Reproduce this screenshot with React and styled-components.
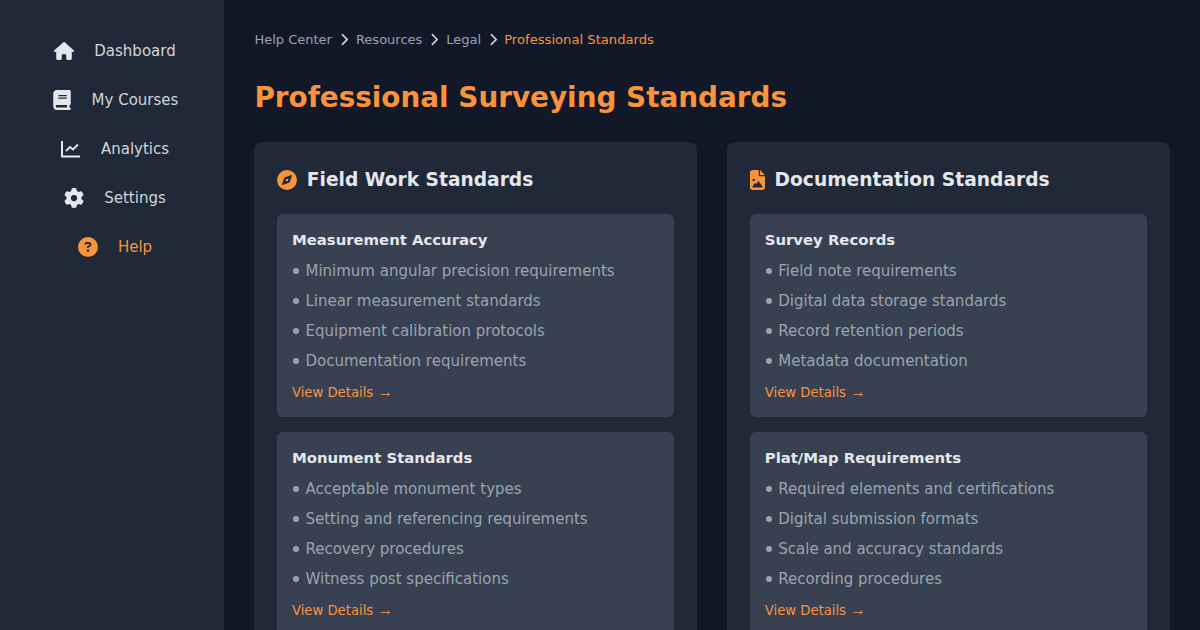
import React from "react";
import styled, { createGlobalStyle } from "styled-components";
import { FaHouse, FaBook, FaGear, FaCircleQuestion, FaCompass, FaChevronRight, FaFileImage } from "react-icons/fa6";

const GlobalStyle = createGlobalStyle`
  html, body {
    margin: 0;
    height: 630px;
    overflow: hidden;
    background: #111827;
    font-family: "DejaVu Sans", sans-serif;
  }
`;

const Page = styled.div`
  display: flex;
  width: 1200px;
  height: 630px;
  overflow: hidden;
`;

const Sidebar = styled.aside`
  width: 224px;
  flex-shrink: 0;
  background: #1f2937;
  padding: 31px 13px 16px 19px;
  box-sizing: border-box;
  display: flex;
  flex-direction: column;
  gap: 8px;
`;

const NavItem = styled.a`
  height: 40.8px;
  display: flex;
  align-items: center;
  justify-content: center;
  gap: 20px;
  font-size: 15px;
  color: ${(p) => (p.$active ? "#fb923c" : "#d1d5db")};
`;

const NavIcon = styled.span`
  width: 20px;
  height: 20px;
  display: flex;
  justify-content: center;
  color: ${(p) => (p.$active ? "#fb923c" : "#e5e7eb")};
  svg { height: 20px; width: auto; flex-shrink: 0; }
`;

const Main = styled.main`
  flex: 1;
  min-width: 0;
  padding: 29px 30.4px 30px;
  box-sizing: border-box;
`;

const Crumbs = styled.nav`
  display: flex;
  align-items: center;
  gap: 7px;
  height: 20px;
  font-size: 13px;
  color: #9ca3af;
  margin-bottom: 31px;
  svg { width: 10px; height: 13px; color: #d1d5db; }
`;

const Current = styled.span`
  margin-left: -1px;
  font-size: 13.15px;
  color: #fb923c;
`;

const Title = styled.h1`
  margin: 0 0 26px;
  font-size: 27.85px;
  line-height: 36px;
  font-weight: 700;
  color: #fb923c;
`;

const Columns = styled.div`
  display: grid;
  grid-template-columns: 1fr 1fr;
  gap: 30.4px;
`;

const Panel = styled.section`
  background: #1f2937;
  border-radius: 8px;
  padding: 26px 22.4px 25px;
`;

const PanelHead = styled.h2`
  display: flex;
  align-items: center;
  gap: 10px;
  margin: 0 0 21.5px;
  font-size: 18.65px;
  line-height: 24px;
  font-weight: 700;
  color: #e5e7eb;
  svg { height: 20px; width: ${(p) => p.$iconWidth}px; color: #fb923c; }
`;

const Card = styled.div`
  background: #374151;
  border-radius: 6px;
  padding: 16.5px 15.2px 15.5px;
  margin-bottom: 15px;
`;

const CardTitle = styled.h3`
  margin: 0 0 5.5px;
  font-size: 14.85px;
  line-height: 20px;
  font-weight: 700;
  color: #e5e7eb;
`;

const Bullets = styled.ul`
  list-style: none;
  margin: 0 0 8.5px;
  padding: 0;
`;

const Bullet = styled.li`
  font-size: 15px;
  line-height: 30px;
  color: #9ca3af;

  &::before {
    content: "";
    display: inline-block;
    width: 6px;
    height: 6px;
    margin: 0 6.5px 1.5px 1px;
    border-radius: 50%;
    background: #9ca3af;
  }
`;

const DetailsLink = styled.a`
  display: block;
  font-size: 13.2px;
  line-height: 17px;
  color: #fb923c;
`;

const Arrow = styled.span`
  font-family: "Liberation Sans", sans-serif;
  font-size: 15.5px;
  line-height: 1;
`;

const ChartIcon = () => (
  <svg viewBox="0 0 20 20" fill="none" stroke="currentColor">
    <path d="M1 2v15.5h18" strokeWidth="2" />
    <path d="M5 12l4-4 3 2.5 5-5" strokeWidth="1.8" />
  </svg>
);

const nav = [
  { label: "Dashboard", icon: FaHouse },
  { label: "My Courses", icon: FaBook },
  { label: "Analytics", icon: ChartIcon },
  { label: "Settings", icon: FaGear },
  { label: "Help", icon: FaCircleQuestion, active: true },
];

const panels = [
  {
    title: "Field Work Standards",
    icon: FaCompass,
    iconWidth: 20,
    cards: [
      { title: "Measurement Accuracy", items: ["Minimum angular precision requirements", "Linear measurement standards", "Equipment calibration protocols", "Documentation requirements"] },
      { title: "Monument Standards", items: ["Acceptable monument types", "Setting and referencing requirements", "Recovery procedures", "Witness post specifications"] },
    ],
  },
  {
    title: "Documentation Standards",
    icon: FaFileImage,
    iconWidth: 15,
    cards: [
      { title: "Survey Records", items: ["Field note requirements", "Digital data storage standards", "Record retention periods", "Metadata documentation"] },
      { title: "Plat/Map Requirements", items: ["Required elements and certifications", "Digital submission formats", "Scale and accuracy standards", "Recording procedures"] },
    ],
  },
];

const App = () => {
  return (
    <Page>
      <GlobalStyle />
      <Sidebar>
        {nav.map((n) => (
          <NavItem key={n.label} $active={n.active}>
            <NavIcon $active={n.active}>
              <n.icon />
            </NavIcon>
            {n.label}
          </NavItem>
        ))}
      </Sidebar>
      <Main>
        <Crumbs>
          <span>Help Center</span>
          <FaChevronRight />
          <span>Resources</span>
          <FaChevronRight />
          <span>Legal</span>
          <FaChevronRight />
          <Current>Professional Standards</Current>
        </Crumbs>
        <Title>Professional Surveying Standards</Title>
        <Columns>
          {panels.map((p) => (
            <Panel key={p.title}>
              <PanelHead $iconWidth={p.iconWidth}>
                <p.icon />
                {p.title}
              </PanelHead>
              {p.cards.map((c) => (
                <Card key={c.title}>
                  <CardTitle>{c.title}</CardTitle>
                  <Bullets>
                    {c.items.map((i) => (
                      <Bullet key={i}>{i}</Bullet>
                    ))}
                  </Bullets>
                  <DetailsLink>
                    View Details <Arrow>→</Arrow>
                  </DetailsLink>
                </Card>
              ))}
            </Panel>
          ))}
        </Columns>
      </Main>
    </Page>
  );
};

export default App;
